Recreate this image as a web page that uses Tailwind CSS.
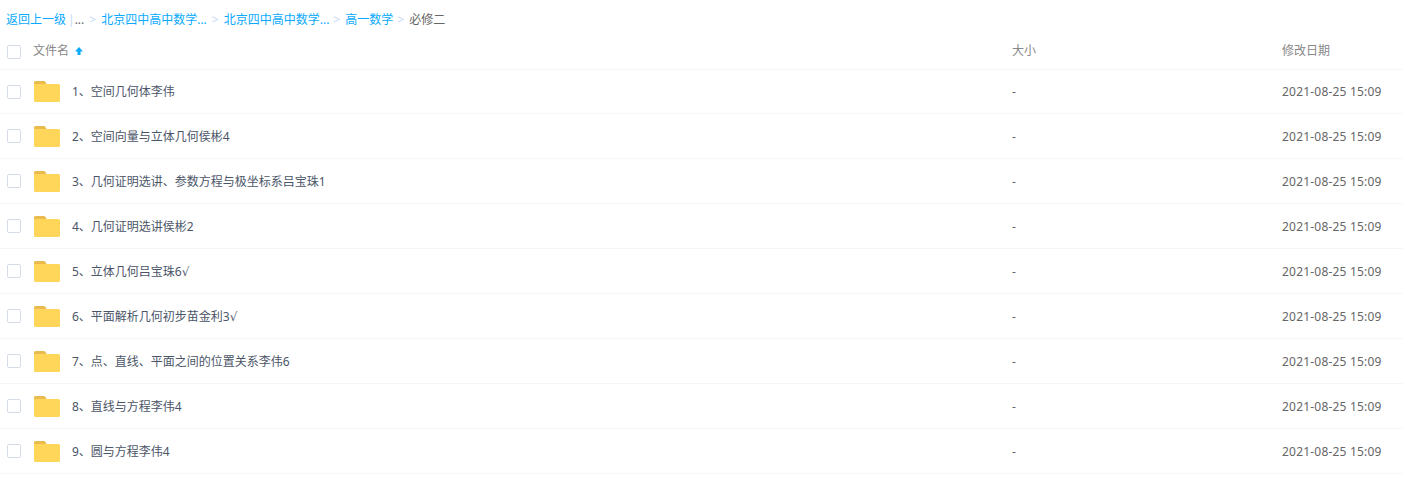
<!DOCTYPE html>
<html lang="zh-CN">
<head>
    <meta charset="UTF-8">
    <title>文件列表</title>
    <script src="https://cdn.jsdelivr.net/npm/@tailwindcss/browser@4"></script>
</head>
<body class="bg-white text-xs text-[#4b5568] font-['Noto_Sans','Noto_Sans_CJK_SC',sans-serif] overflow-hidden">

    <!-- breadcrumb -->
    <div class="flex items-center h-[14px] mt-[13px] pl-[6px] whitespace-nowrap text-[#09aaff]">
        <span>返回上一级</span>
        <span class="text-[#c4d8f4] ml-[2px]">|</span>
        <span class="text-[#666]">...</span>
        <span class="text-[#c4d8f4] mx-[5px]">&gt;</span>
        <span>北京四中高中数学...</span>
        <span class="text-[#c4d8f4] mx-[5px]">&gt;</span>
        <span>北京四中高中数学...</span>
        <span class="text-[#c4d8f4] ml-[4px] mr-[5px]">&gt;</span>
        <span>高一数学</span>
        <span class="text-[#c4d8f4] ml-[4px] mr-[5px]">&gt;</span>
        <span class="text-[#666]">必修二</span>
    </div>

    <!-- header -->
    <div class="flex items-center h-[37px] mt-[6px] border-b border-[#f4f6fa] text-[#888]">
        <span class="w-[14px] h-[14px] ml-[7px] mt-[2px] border border-[#d5dce8] rounded-[2px]"></span>
        <span class="ml-[12px] w-[979px] flex items-center">
            文件名
            <svg class="ml-[6px]" width="8" height="8" viewBox="0 0 8 8"><path d="M4 0L8 4.500H5.500V8H2.500V4.500H0Z" fill="#09aaff"/></svg>
        </span>
        <span class="w-[270px]">大小</span>
        <span>修改日期</span>
    </div>

    <!-- rows -->
    <div class="flex items-center h-[44px] border-b border-[#f4f6fa]">
        <span class="w-[14px] h-[14px] ml-[7px] border border-[#d5dce8] rounded-[2px]"></span>
        <svg class="ml-[13px]" width="26" height="21" viewBox="0 0 26 21"><path d="M0 2Q0 0 2 0H4V3H24.5Q26 3 26 4.500V19.500Q26 21 24.500 21H1.500Q0 21 0 19.500Z" fill="#ffd659"/><path d="M0 3V2Q0 0 2 0H9.500Q11 0 11.500 1L12.500 3Z" fill="#e9bb4e"/></svg>
        <span class="ml-[12px] w-[940px]">1、空间几何体李伟</span>
        <span class="w-[270px] text-[#666]">-</span>
        <span class="text-[#666] tracking-[0.2px]">2021-08-25 15:09</span>
    </div>
    <div class="flex items-center h-[45px] border-b border-[#f4f6fa]">
        <span class="w-[14px] h-[14px] ml-[7px] border border-[#d5dce8] rounded-[2px]"></span>
        <svg class="ml-[13px]" width="26" height="21" viewBox="0 0 26 21"><path d="M0 2Q0 0 2 0H4V3H24.5Q26 3 26 4.500V19.500Q26 21 24.500 21H1.500Q0 21 0 19.500Z" fill="#ffd659"/><path d="M0 3V2Q0 0 2 0H9.500Q11 0 11.500 1L12.500 3Z" fill="#e9bb4e"/></svg>
        <span class="ml-[12px] w-[940px] pt-[2px]">2、空间向量与立体几何侯彬4</span>
        <span class="w-[270px] pt-[2px] text-[#666]">-</span>
        <span class="pt-[2px] text-[#666] tracking-[0.2px]">2021-08-25 15:09</span>
    </div>
    <div class="flex items-center h-[45px] border-b border-[#f4f6fa]">
        <span class="w-[14px] h-[14px] ml-[7px] border border-[#d5dce8] rounded-[2px]"></span>
        <svg class="ml-[13px]" width="26" height="21" viewBox="0 0 26 21"><path d="M0 2Q0 0 2 0H4V3H24.5Q26 3 26 4.500V19.500Q26 21 24.500 21H1.500Q0 21 0 19.500Z" fill="#ffd659"/><path d="M0 3V2Q0 0 2 0H9.500Q11 0 11.500 1L12.500 3Z" fill="#e9bb4e"/></svg>
        <span class="ml-[12px] w-[940px] pt-[2px]">3、几何证明选讲、参数方程与极坐标系吕宝珠1</span>
        <span class="w-[270px] pt-[2px] text-[#666]">-</span>
        <span class="pt-[2px] text-[#666] tracking-[0.2px]">2021-08-25 15:09</span>
    </div>
    <div class="flex items-center h-[45px] border-b border-[#f4f6fa]">
        <span class="w-[14px] h-[14px] ml-[7px] border border-[#d5dce8] rounded-[2px]"></span>
        <svg class="ml-[13px]" width="26" height="21" viewBox="0 0 26 21"><path d="M0 2Q0 0 2 0H4V3H24.5Q26 3 26 4.500V19.500Q26 21 24.500 21H1.500Q0 21 0 19.500Z" fill="#ffd659"/><path d="M0 3V2Q0 0 2 0H9.500Q11 0 11.500 1L12.500 3Z" fill="#e9bb4e"/></svg>
        <span class="ml-[12px] w-[940px] pt-[2px]">4、几何证明选讲侯彬2</span>
        <span class="w-[270px] pt-[2px] text-[#666]">-</span>
        <span class="pt-[2px] text-[#666] tracking-[0.2px]">2021-08-25 15:09</span>
    </div>
    <div class="flex items-center h-[45px] border-b border-[#f4f6fa]">
        <span class="w-[14px] h-[14px] ml-[7px] border border-[#d5dce8] rounded-[2px]"></span>
        <svg class="ml-[13px]" width="26" height="21" viewBox="0 0 26 21"><path d="M0 2Q0 0 2 0H4V3H24.5Q26 3 26 4.500V19.500Q26 21 24.500 21H1.500Q0 21 0 19.500Z" fill="#ffd659"/><path d="M0 3V2Q0 0 2 0H9.500Q11 0 11.500 1L12.500 3Z" fill="#e9bb4e"/></svg>
        <span class="ml-[12px] w-[940px] pt-[2px]">5、立体几何吕宝珠6<span class="font-['DejaVu_Sans']">√</span></span>
        <span class="w-[270px] pt-[2px] text-[#666]">-</span>
        <span class="pt-[2px] text-[#666] tracking-[0.2px]">2021-08-25 15:09</span>
    </div>
    <div class="flex items-center h-[45px] border-b border-[#f4f6fa]">
        <span class="w-[14px] h-[14px] ml-[7px] border border-[#d5dce8] rounded-[2px]"></span>
        <svg class="ml-[13px]" width="26" height="21" viewBox="0 0 26 21"><path d="M0 2Q0 0 2 0H4V3H24.5Q26 3 26 4.500V19.500Q26 21 24.500 21H1.500Q0 21 0 19.500Z" fill="#ffd659"/><path d="M0 3V2Q0 0 2 0H9.500Q11 0 11.500 1L12.500 3Z" fill="#e9bb4e"/></svg>
        <span class="ml-[12px] w-[940px] pt-[2px]">6、平面解析几何初步苗金利3<span class="font-['DejaVu_Sans']">√</span></span>
        <span class="w-[270px] pt-[2px] text-[#666]">-</span>
        <span class="pt-[2px] text-[#666] tracking-[0.2px]">2021-08-25 15:09</span>
    </div>
    <div class="flex items-center h-[45px] border-b border-[#f4f6fa]">
        <span class="w-[14px] h-[14px] ml-[7px] border border-[#d5dce8] rounded-[2px]"></span>
        <svg class="ml-[13px]" width="26" height="21" viewBox="0 0 26 21"><path d="M0 2Q0 0 2 0H4V3H24.5Q26 3 26 4.500V19.500Q26 21 24.500 21H1.500Q0 21 0 19.500Z" fill="#ffd659"/><path d="M0 3V2Q0 0 2 0H9.500Q11 0 11.500 1L12.500 3Z" fill="#e9bb4e"/></svg>
        <span class="ml-[12px] w-[940px] pt-[2px]">7、点、直线、平面之间的位置关系李伟6</span>
        <span class="w-[270px] pt-[2px] text-[#666]">-</span>
        <span class="pt-[2px] text-[#666] tracking-[0.2px]">2021-08-25 15:09</span>
    </div>
    <div class="flex items-center h-[45px] border-b border-[#f4f6fa]">
        <span class="w-[14px] h-[14px] ml-[7px] border border-[#d5dce8] rounded-[2px]"></span>
        <svg class="ml-[13px]" width="26" height="21" viewBox="0 0 26 21"><path d="M0 2Q0 0 2 0H4V3H24.5Q26 3 26 4.500V19.500Q26 21 24.500 21H1.500Q0 21 0 19.500Z" fill="#ffd659"/><path d="M0 3V2Q0 0 2 0H9.500Q11 0 11.500 1L12.500 3Z" fill="#e9bb4e"/></svg>
        <span class="ml-[12px] w-[940px] pt-[2px]">8、直线与方程李伟4</span>
        <span class="w-[270px] pt-[2px] text-[#666]">-</span>
        <span class="pt-[2px] text-[#666] tracking-[0.2px]">2021-08-25 15:09</span>
    </div>
    <div class="flex items-center h-[45px] border-b border-[#f4f6fa]">
        <span class="w-[14px] h-[14px] ml-[7px] border border-[#d5dce8] rounded-[2px]"></span>
        <svg class="ml-[13px]" width="26" height="21" viewBox="0 0 26 21"><path d="M0 2Q0 0 2 0H4V3H24.5Q26 3 26 4.500V19.500Q26 21 24.500 21H1.500Q0 21 0 19.500Z" fill="#ffd659"/><path d="M0 3V2Q0 0 2 0H9.500Q11 0 11.500 1L12.500 3Z" fill="#e9bb4e"/></svg>
        <span class="ml-[12px] w-[940px] pt-[2px]">9、圆与方程李伟4</span>
        <span class="w-[270px] pt-[2px] text-[#666]">-</span>
        <span class="pt-[2px] text-[#666] tracking-[0.2px]">2021-08-25 15:09</span>
    </div>

</body>
</html>
